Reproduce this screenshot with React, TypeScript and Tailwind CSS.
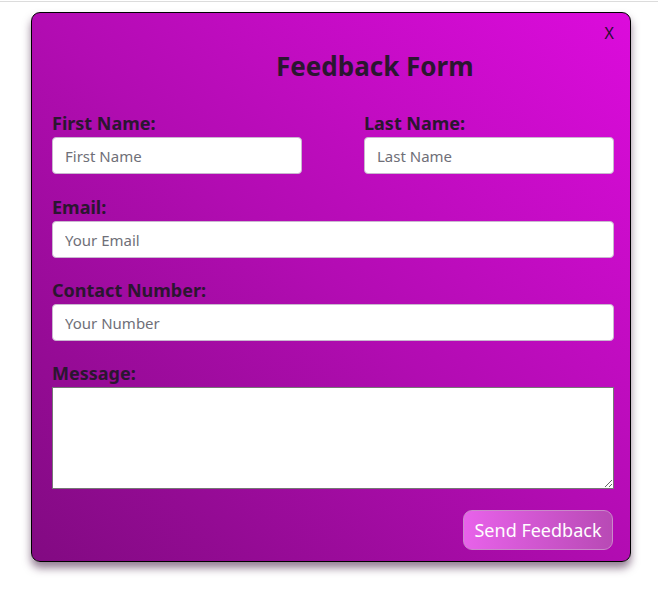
import React from 'react'

const inputCls =
  'w-full h-[37px] rounded-[4px] border border-[#c9b7cf] bg-white px-[12px] text-[15px] text-[#333] placeholder:text-[#6f6f78] outline-none'

const labelCls = 'block text-[18px] font-bold leading-[22px] text-[#2b1630] mb-[3px]'

export default function App() {
  return (
    <div className="min-h-[591px] w-full bg-white" style={{ fontFamily: '"Noto Sans", "Open Sans", sans-serif' }}>
      <div className="h-[2px] w-[658px] border-t border-[#dcdcdc] mt-[1px]" />
      <div className="pt-[9px] pl-[31px]">
        <div className="w-[600px] h-[550px] rounded-[9px] border border-black bg-gradient-to-tr from-[#820a82] via-[#b20cb2] to-[#dc0bdc] shadow-[0_6px_8px_rgba(60,20,60,0.55)] pl-[20px] pr-[16px] pt-[10px]">
          <div className="flex justify-end">
            <button className="text-[16px] leading-[20px] text-[#2a0d30]">X</button>
          </div>
          <h1 className="pl-[224px] text-[26px] font-bold leading-[32px] text-[#2b1630] mt-[7px]">Feedback Form</h1>

          <div className="mt-[30px] flex justify-between">
            <div className="w-[250px]">
              <label className={labelCls}>First Name:</label>
              <input className={inputCls} placeholder="First Name" />
            </div>
            <div className="w-[250px]">
              <label className={labelCls}>Last Name:</label>
              <input className={inputCls} placeholder="Last Name" />
            </div>
          </div>

          <div className="mt-[22px]">
            <label className={labelCls}>Email:</label>
            <input className={inputCls + ' w-[562px]'} placeholder="Your Email" />
          </div>

          <div className="mt-[21px]">
            <label className={labelCls}>Contact Number:</label>
            <input className={inputCls + ' w-[562px]'} placeholder="Your Number" />
          </div>

          <div className="mt-[21px]">
            <label className={labelCls}>Message:</label>
            <textarea className="block w-[562px] h-[102px] border border-[#767676] bg-white outline-none" />
          </div>

          <div className="mt-[21px] flex justify-end pr-[1px]">
            <button className="w-[150px] h-[40px] rounded-[9px] border border-[#c98ac9] bg-gradient-to-r from-[#e862ea] to-[#b84ab5] text-[18px] text-white">
              Send Feedback
            </button>
          </div>
        </div>
      </div>
    </div>
  )
}
